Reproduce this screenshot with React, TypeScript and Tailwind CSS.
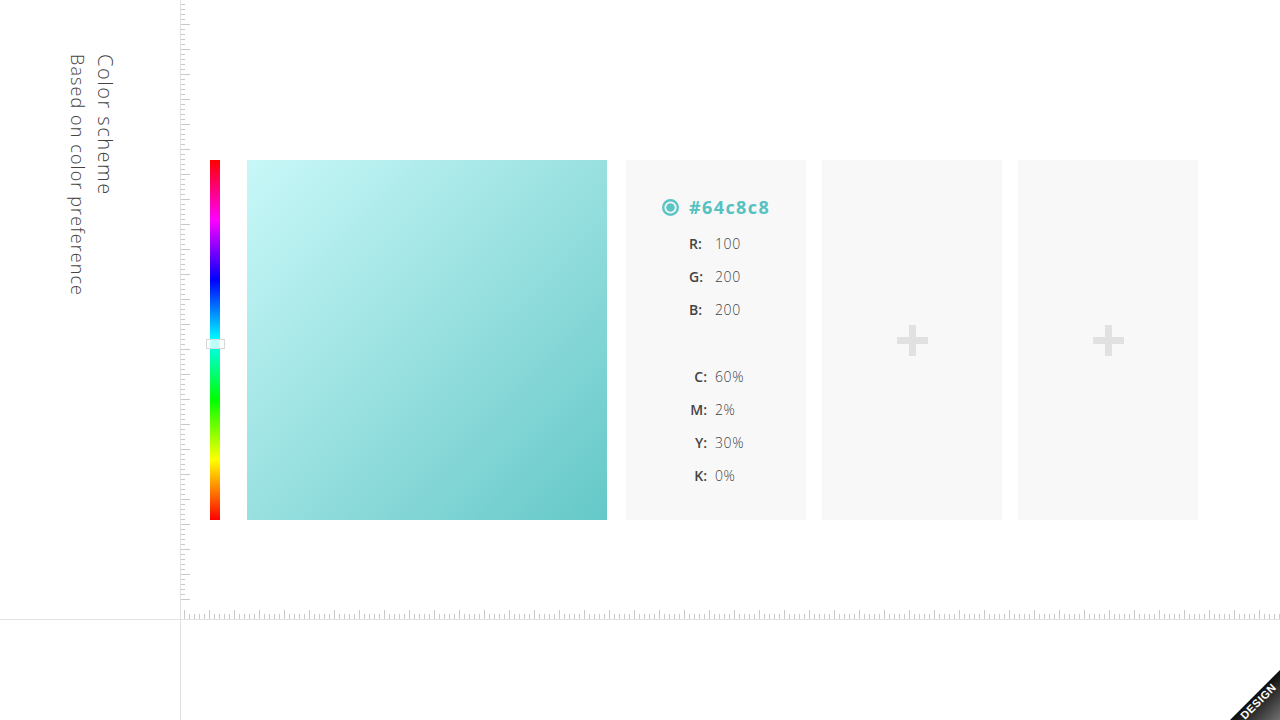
const vTicks = Array.from({ length: 120 }, (_, k) => ({ y: 4 + k * 5, long: k % 5 === 4 }))
const hTicks = Array.from({ length: 220 }, (_, k) => ({ x: 3 + k * 5, long: k % 5 === 0 }))

const rgb = [
  ['R:', '100'],
  ['G:', '200'],
  ['B:', '200'],
]
const cmyk = [
  ['C:', '60%'],
  ['M:', '2%'],
  ['Y:', '30%'],
  ['K:', '0%'],
]

function VerticalRuler() {
  return (
    <svg width="10" height="609" className="shrink-0">
      {vTicks.map((t) => (
        <rect key={t.y} x="0" y={t.y} width={t.long ? 9 : 4} height="1" fill="#c9c9c9" />
      ))}
    </svg>
  )
}

function HorizontalRuler() {
  return (
    <svg width="1099" height="10" className="shrink-0">
      {hTicks.map((t) => (
        <rect key={t.x} x={t.x} y={t.long ? 1 : 5} width="1" height={t.long ? 9 : 5} fill="#c9c9c9" />
      ))}
    </svg>
  )
}

function PlusIcon() {
  return (
    <svg width="31" height="31" viewBox="0 0 31 31">
      <rect x="12" y="0" width="7" height="31" fill="#e1e1e1" />
      <rect x="0" y="12" width="31" height="7" fill="#e1e1e1" />
    </svg>
  )
}

function EmptySlot() {
  return (
    <div className="flex h-[360px] w-[180px] items-center justify-center bg-[#f8f8f8]">
      <PlusIcon />
    </div>
  )
}

function ColorInfo() {
  return (
    <div className="h-[360px] w-[180px] bg-[#f8f8f8] pl-[36px] pt-[37px] font-['Open_Sans',sans-serif]">
      <div className="flex h-[20px] items-center gap-[10px]">
        <svg width="17" height="17" viewBox="0 0 17 17">
          <circle cx="8.5" cy="8.5" r="7.3" fill="none" stroke="#5cc4c4" strokeWidth="2.4" />
          <circle cx="8.5" cy="8.5" r="4.3" fill="#5cc4c4" />
        </svg>
        <span className="text-[18px] font-bold leading-none tracking-[1.4px] text-[#55c2c2]">#64c8c8</span>
      </div>

      <div className="mt-[10px] grid grid-cols-[26px_auto] pl-[27px] text-[14px]">
        {rgb.map(([k, v]) => (
          <div key={k} className="contents">
            <span className="leading-[33px] font-semibold text-[#444]">{k}</span>
            <span className="leading-[33px] font-light tracking-[0.6px] text-[#444]">{v}</span>
          </div>
        ))}
      </div>

      <div className="mt-[34px] grid grid-cols-[34px_auto] pl-[19px] text-[14px]">
        {cmyk.map(([k, v]) => (
          <div key={k} className="contents">
            <span className="pr-[8px] text-right leading-[33px] font-semibold text-[#444]">{k}</span>
            <span className="leading-[33px] font-light tracking-[0.6px] text-[#444]">{v}</span>
          </div>
        ))}
      </div>
    </div>
  )
}

export default function App() {
  return (
    <div className="relative flex h-[720px] w-[1280px] flex-col overflow-hidden bg-white">
      <div className="flex h-[620px] border-b border-[#e3e3e3]">
        <aside className="w-[180px] shrink-0 pl-[66px] pt-[54px]">
          <div className="h-[260px] font-['Open_Sans',sans-serif] font-light text-[#444] [writing-mode:vertical-rl]">
            <p className="text-[20px] leading-[30px] tracking-[1.5px]">Color scheme</p>
            <p className="text-[18px] leading-[24px] tracking-[1.1px]">Based on color preference</p>
          </div>
        </aside>

        <div className="flex flex-1 flex-col border-l border-[#e0e0e0]">
          <div className="flex flex-1">
            <VerticalRuler />
            <div className="flex items-start pl-[19px] pt-[160px]">
              <div className="relative h-[360px] w-[10px] bg-[linear-gradient(to_bottom,#ff0000_0%,#ff00ff_16.7%,#0000ff_33.3%,#00ffff_50%,#00ff00_66.7%,#ffff00_83.3%,#ff0000_100%)]">
                <div className="absolute left-[-4px] top-[179px] h-[10px] w-[19px] border border-[#d8d8d8] bg-white/75" />
              </div>
              <div className="ml-[27px] h-[360px] w-[360px] bg-linear-to-br from-[#c8f8f8] to-[#64c8c8]" />
              <div className="ml-[19px] flex gap-[16px]">
                <ColorInfo />
                <EmptySlot />
                <EmptySlot />
              </div>
            </div>
          </div>
          <HorizontalRuler />
        </div>
      </div>

      <div className="flex flex-1">
        <div className="w-[180px] shrink-0" />
        <div className="flex-1 border-l border-[#e0e0e0]" />
      </div>

      <div className="absolute bottom-0 right-0 h-[50px] w-[50px]">
        <svg width="50" height="50" viewBox="0 0 50 50">
          <defs>
            <linearGradient id="badge" x1="0" y1="0" x2="1" y2="1">
              <stop offset="0.5" stopColor="#0d0d0d" />
              <stop offset="1" stopColor="#707070" />
            </linearGradient>
          </defs>
          <polygon points="0,50 50,0 50,50" fill="url(#badge)" />
        </svg>
        <span className="absolute left-[6px] top-[26px] -rotate-45 font-['Liberation_Sans',sans-serif] text-[11px] font-bold leading-none tracking-[0.5px] text-white">
          DESIGN
        </span>
      </div>
    </div>
  )
}
